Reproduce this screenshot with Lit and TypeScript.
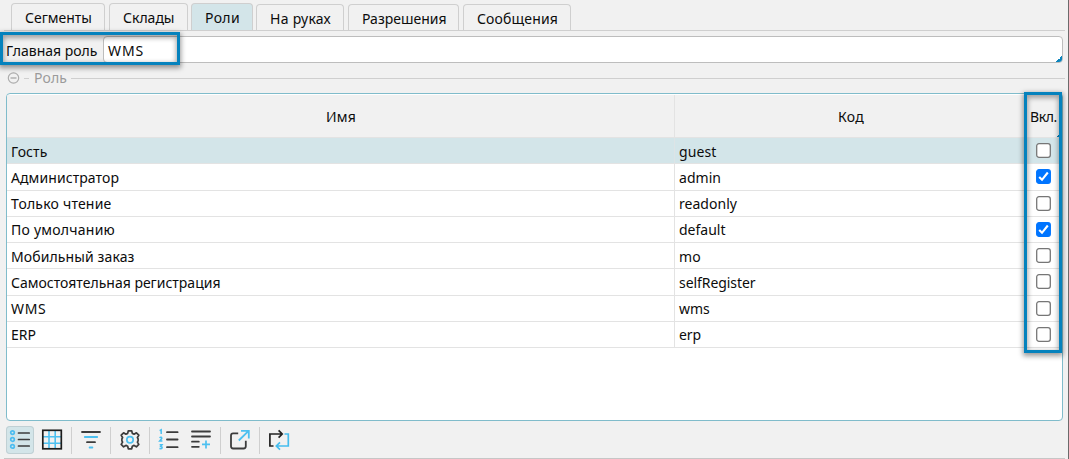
import { LitElement, html, css, svg } from "lit";
import { customElement, property } from "lit/decorators.js";

/** A single-line caption whose tracking adapts to a given width. */
@customElement("fit-label")
class FitLabel extends LitElement {
  @property() text = "";
  @property({ type: Number }) w = 0;
  static styles = css`
    :host { display: inline-block; white-space: pre; flex: none; }
  `;
  render() {
    return html`<span>${this.text}</span>`;
  }
  updated() {
    const s = this.renderRoot.querySelector("span") as HTMLElement;
    s.style.letterSpacing = "0px";
    const natural = s.getBoundingClientRect().width;
    if (this.w) s.style.letterSpacing = (this.w + 1 - natural) / this.text.length + "px";
  }
}

const tabs = [
  { text: "Сегменты", w: 66, cls: "t1" },
  { text: "Склады", w: 50.5, cls: "t2" },
  { text: "Роли", w: 34, cls: "t3 on" },
  { text: "На руках", w: 60, cls: "t4 low" },
  { text: "Разрешения", w: 83.5, cls: "t5 low" },
  { text: "Сообщения", w: 80, cls: "t6 low" },
];

const rows = [
  { name: "Гость", nw: 35.5, code: "guest", cw: 36.5, on: false },
  { name: "Администратор", nw: 107, code: "admin", cw: 41, on: true },
  { name: "Только чтение", nw: 99.5, code: "readonly", cw: 57, on: false },
  { name: "По умолчанию", nw: 103, code: "default", cw: 45.5, on: true },
  { name: "Мобильный заказ", nw: 122.5, code: "mo", cw: 21, on: false },
  { name: "Самостоятельная регистрация", nw: 208.5, code: "selfRegister", cw: 75.5, on: false },
  { name: "WMS", nw: 34.5, code: "wms", cw: 29.5, on: false },
  { name: "ERP", nw: 24, code: "erp", cw: 21, on: false },
];

const icon = (body: unknown) =>
  html`<svg class="ico" width="28" height="28" viewBox="0 0 28 28" fill="none" stroke="#3c3c3c" stroke-width="1.8">${body}</svg>`;

const icons = {
  list: icon(svg`
    <g stroke="#4dbdf0" stroke-width="1.7"><circle cx="6.5" cy="6.6" r="1.8"/><circle cx="6.5" cy="13.5" r="1.8"/><circle cx="6.5" cy="20.4" r="1.8"/></g>
    <path d="M12.5 7H23.2M12.5 13.5H23.2M12.5 20H23.2" stroke-width="1.7" stroke-linecap="round"/>`),
  grid: icon(svg`
    <path d="M11 5V23M17.2 5V23M5 10.8H23M5 17.2H23" stroke="#4dc0f0" stroke-width="1.6"/>
    <rect x="4.8" y="4.3" width="18.5" height="18.5" stroke="#1c1c1c" stroke-width="1.7"/>`),
  filter: icon(svg`
    <path d="M5 6H23M10 16.2H18" stroke-linecap="round"/>
    <path d="M7.8 11H20.2M12.6 21.5H15.4" stroke="#4dc0f0" stroke-linecap="round"/>`),
  gear: icon(svg`
    <path d="M12.3 4.8h3.4l.6 2.6 1.8.8 2.3-1.4 2.4 2.4-1.4 2.3.7 1.3 0 2-.7 1.3 1.4 2.3-2.4 2.4-2.3-1.4-1.8.8-.6 2.6h-3.4l-.6-2.6-1.8-.8-2.3 1.4-2.4-2.4 1.4-2.3-.7-1.3v-2l.7-1.3-1.4-2.3 2.4-2.4 2.3 1.4 1.8-.8z" stroke-width="1.7" stroke-linejoin="round"/>
    <circle cx="14" cy="13.8" r="3.2" stroke="#4dc0f0" stroke-width="1.7"/>`),
  numbers: icon(svg`
    <path d="M12 6.2H22.6M12 13.5H22.6M12 21.2H22.6" stroke-linecap="round"/>
    <g stroke="#4dc0f0" stroke-width="1.5"><path d="M4.6 4.6L6.2 3.8V8M4.5 11.7C5.5 10.8 7.2 11.2 6.7 12.6L4.7 15H7.4M4.6 18.8H7L5.8 20.4C7.7 20.5 7.4 22.7 6 22.8L4.4 22.4"/></g>`),
  add: icon(svg`
    <path d="M5 5.5H23M5 10.5H23M5 15.7H11.8M5 20.8H11.8" stroke-linecap="round"/>
    <path d="M19 14.4V22.4M15 18.4H23" stroke="#4dc0f0" stroke-width="1.7"/>`),
  open: icon(svg`
    <path d="M12.2 7.4H7.1Q5 7.4 5 9.5V20.3Q5 22.5 7.1 22.5H17.6Q19.8 22.5 19.8 20.3V14.8" stroke-width="1.8"/>
    <path d="M12.8 14.5L22.6 4.8M15 4.8H22.8V12.5" stroke="#4dc0f0" stroke-width="1.8"/>`),
  loop: icon(svg`
    <path d="M8.5 20H4.9V8H17M13.6 4.4L17.2 8L13.6 11.6" stroke="#222" stroke-width="1.7"/>
    <path d="M19.5 8H23.3V20H11.5M15 16.3L11.3 20L15 23.7" stroke="#45bdee" stroke-width="1.7"/>`),
};

@customElement("app-root")
class AppRoot extends LitElement {
  static styles = css`
    :host {
      display: block; width: 1069px; height: 459px; overflow: hidden; position: relative;
      background: #f1f1f1; color: #0c0c0c; font: 14px/18px "Noto Sans", "Open Sans", sans-serif;
    }
    * { box-sizing: border-box; }
    .page { height: 459px; padding: 3px 3px 0 4px; display: flex; flex-direction: column; border-right: 1px solid #6b6b6b; }
    .tabs { display: flex; align-items: flex-end; height: 28px; padding-left: 7px; border-bottom: 1px solid #cfcfcf; flex: none; }
    .tab { height: 27px; border: 1px solid #cfcfcf; border-bottom: 0; border-radius: 4px 4px 0 0; padding: 5px 0 0 13px; }
    .low { height: 26px; }
    .on { background: #d3e5e9; }
    .t1 { width: 94px; margin-right: 4px; }
    .t2 { width: 79px; margin-right: 3px; }
    .t3 { width: 62px; margin-right: 3px; }
    .t4 { width: 88px; margin-right: 4px; }
    .t5 { width: 111px; margin-right: 4px; }
    .t6 { width: 108px; }
    .main { display: flex; height: 27px; margin: 5px 2px 0 2px; flex: none; }
    .main > fit-label { width: 97px; padding-top: 6px; }
    .field { flex: 1; background: #fff; border: 1px solid #bdbdbd; border-radius: 4px; display: flex; justify-content: space-between; align-items: flex-end; padding: 0 0 0 4px; overflow: hidden; }
    .field fit-label { align-self: flex-start; padding-top: 5px; }
    .corner { width: 6px; height: 6px; background: linear-gradient(135deg, transparent 50%, #0a84bd 50%); }
    .legend { display: flex; align-items: center; height: 30px; color: #9b9b9b; flex: none; padding-left: 3px; }
    .dash { height: 1px; width: 5px; background: #cfcfcf; margin: 0 5px 0 4px; }
    .rule { height: 1px; flex: 1; background: #cfcfcf; margin-left: 4px; }
    .table { margin: 0 2px; height: 328px; border: 1px solid #80bccb; border-radius: 4px; background: #fff; overflow: hidden; padding-top: 1px; flex: none; }
    .row, .head { display: grid; grid-template-columns: 668px 352px 1fr; height: 26.25px; border-bottom: 1px solid #e3e3e3; }
    .head { height: 43px; background: #f1f1f1; }
    .head .cell { justify-content: center; padding: 1px 0 0 1px; }
    .head .last { align-items: stretch; padding: 0; justify-content: flex-end; }
    .head .last fit-label { padding-top: 13px; }
    .head .corner { align-self: flex-end; width: 5px; height: 5px; }
    .cell { display: flex; align-items: center; padding: 2px 0 0 4px; border-right: 1px solid #e3e3e3; }
    .last { border-right: 0; padding: 0 2px 0 0; justify-content: center; }
    .sel { background: #d3e5e9; }
    .sel .cell { border-color: #dde4e6; }
    .check { width: 15px; height: 15px; display: block; }
    .tools { display: flex; align-items: center; height: 28px; margin: 5px 0 0 2px; flex: none; }
    .ico { display: block; flex: none; }
    .btn { width: 28px; height: 28px; border-radius: 4px; }
    .active { background: #d3e5e9; box-shadow: inset 0 0 0 1px #c0d0d4; margin-right: 4px; }
    .gap { margin-right: 4px; }
    .sep { width: 1px; height: 27px; background: #cfcfcf; margin: 0 5px; }
    .foot { height: 1px; background: #c6c6c6; margin-top: 4px; flex: none; }
    .mark { position: absolute; border: 3px solid #0582bd; box-shadow: 0 2px 5px 1px #0006, inset 0 2px 5px 1px #0005; pointer-events: none; }
    .m1 { left: 0; top: 32px; width: 180px; height: 33px; }
    .m2 { left: 1024px; top: 92px; width: 38px; height: 261px; }
  `;

  check(on: boolean) {
    return html`<svg class="check" viewBox="0 0 15 15">
      <rect x="0.7" y="0.7" width="13.6" height="13.6" rx="2.3" fill=${on ? "#0075ff" : "#fff"} stroke=${on ? "#0075ff" : "#767676"} stroke-width="1.3"/>
      ${on ? svg`<path d="M3.2 8L6 10.8L11.8 3.5" fill="none" stroke="#fff" stroke-width="2.1"/>` : ""}
    </svg>`;
  }

  render() {
    const sep = html`<div class="sep"></div>`;
    return html`
      <div class="page">
        <div class="tabs">
          ${tabs.map((t) => html`<div class="tab ${t.cls}"><fit-label .text=${t.text} .w=${t.w}></fit-label></div>`)}
        </div>
        <div class="main">
          <fit-label .text=${"Главная роль"} .w=${90.5}></fit-label>
          <div class="field"><fit-label .text=${"WMS"} .w=${35}></fit-label><div class="corner"></div></div>
        </div>
        <div class="legend">
          <svg width="13" height="13" viewBox="0 0 13 13" fill="none" stroke="#adadad" stroke-width="1.2"><circle cx="6.5" cy="6" r="5.2"/><path d="M3.5 6H9.5" stroke-width="1.4"/></svg>
          <div class="dash"></div><fit-label .text=${"Роль"} .w=${32}></fit-label><div class="rule"></div>
        </div>
        <div class="table">
          <div class="head">
            <div class="cell"><fit-label .text=${"Имя"} .w=${29}></fit-label></div>
            <div class="cell"><fit-label .text=${"Код"} .w=${25}></fit-label></div>
            <div class="cell last"><fit-label .text=${"Вкл."} .w=${26}></fit-label><div class="corner"></div></div>
          </div>
          ${rows.map((r, i) => html`<div class="row ${i === 0 ? "sel" : ""}">
            <div class="cell"><fit-label .text=${r.name} .w=${r.nw}></fit-label></div>
            <div class="cell"><fit-label .text=${r.code} .w=${r.cw}></fit-label></div>
            <div class="cell last">${this.check(r.on)}</div>
          </div>`)}
        </div>
        <div class="tools">
          <div class="btn active">${icons.list}</div>${icons.grid}
          ${sep}${icons.filter}${sep}${icons.gear}${sep}<div class="gap">${icons.numbers}</div>${icons.add}
          ${sep}${icons.open}${sep}${icons.loop}
        </div>
        <div class="foot"></div>
      </div>
      <div class="mark m1"></div>
      <div class="mark m2"></div>
    `;
  }
}
